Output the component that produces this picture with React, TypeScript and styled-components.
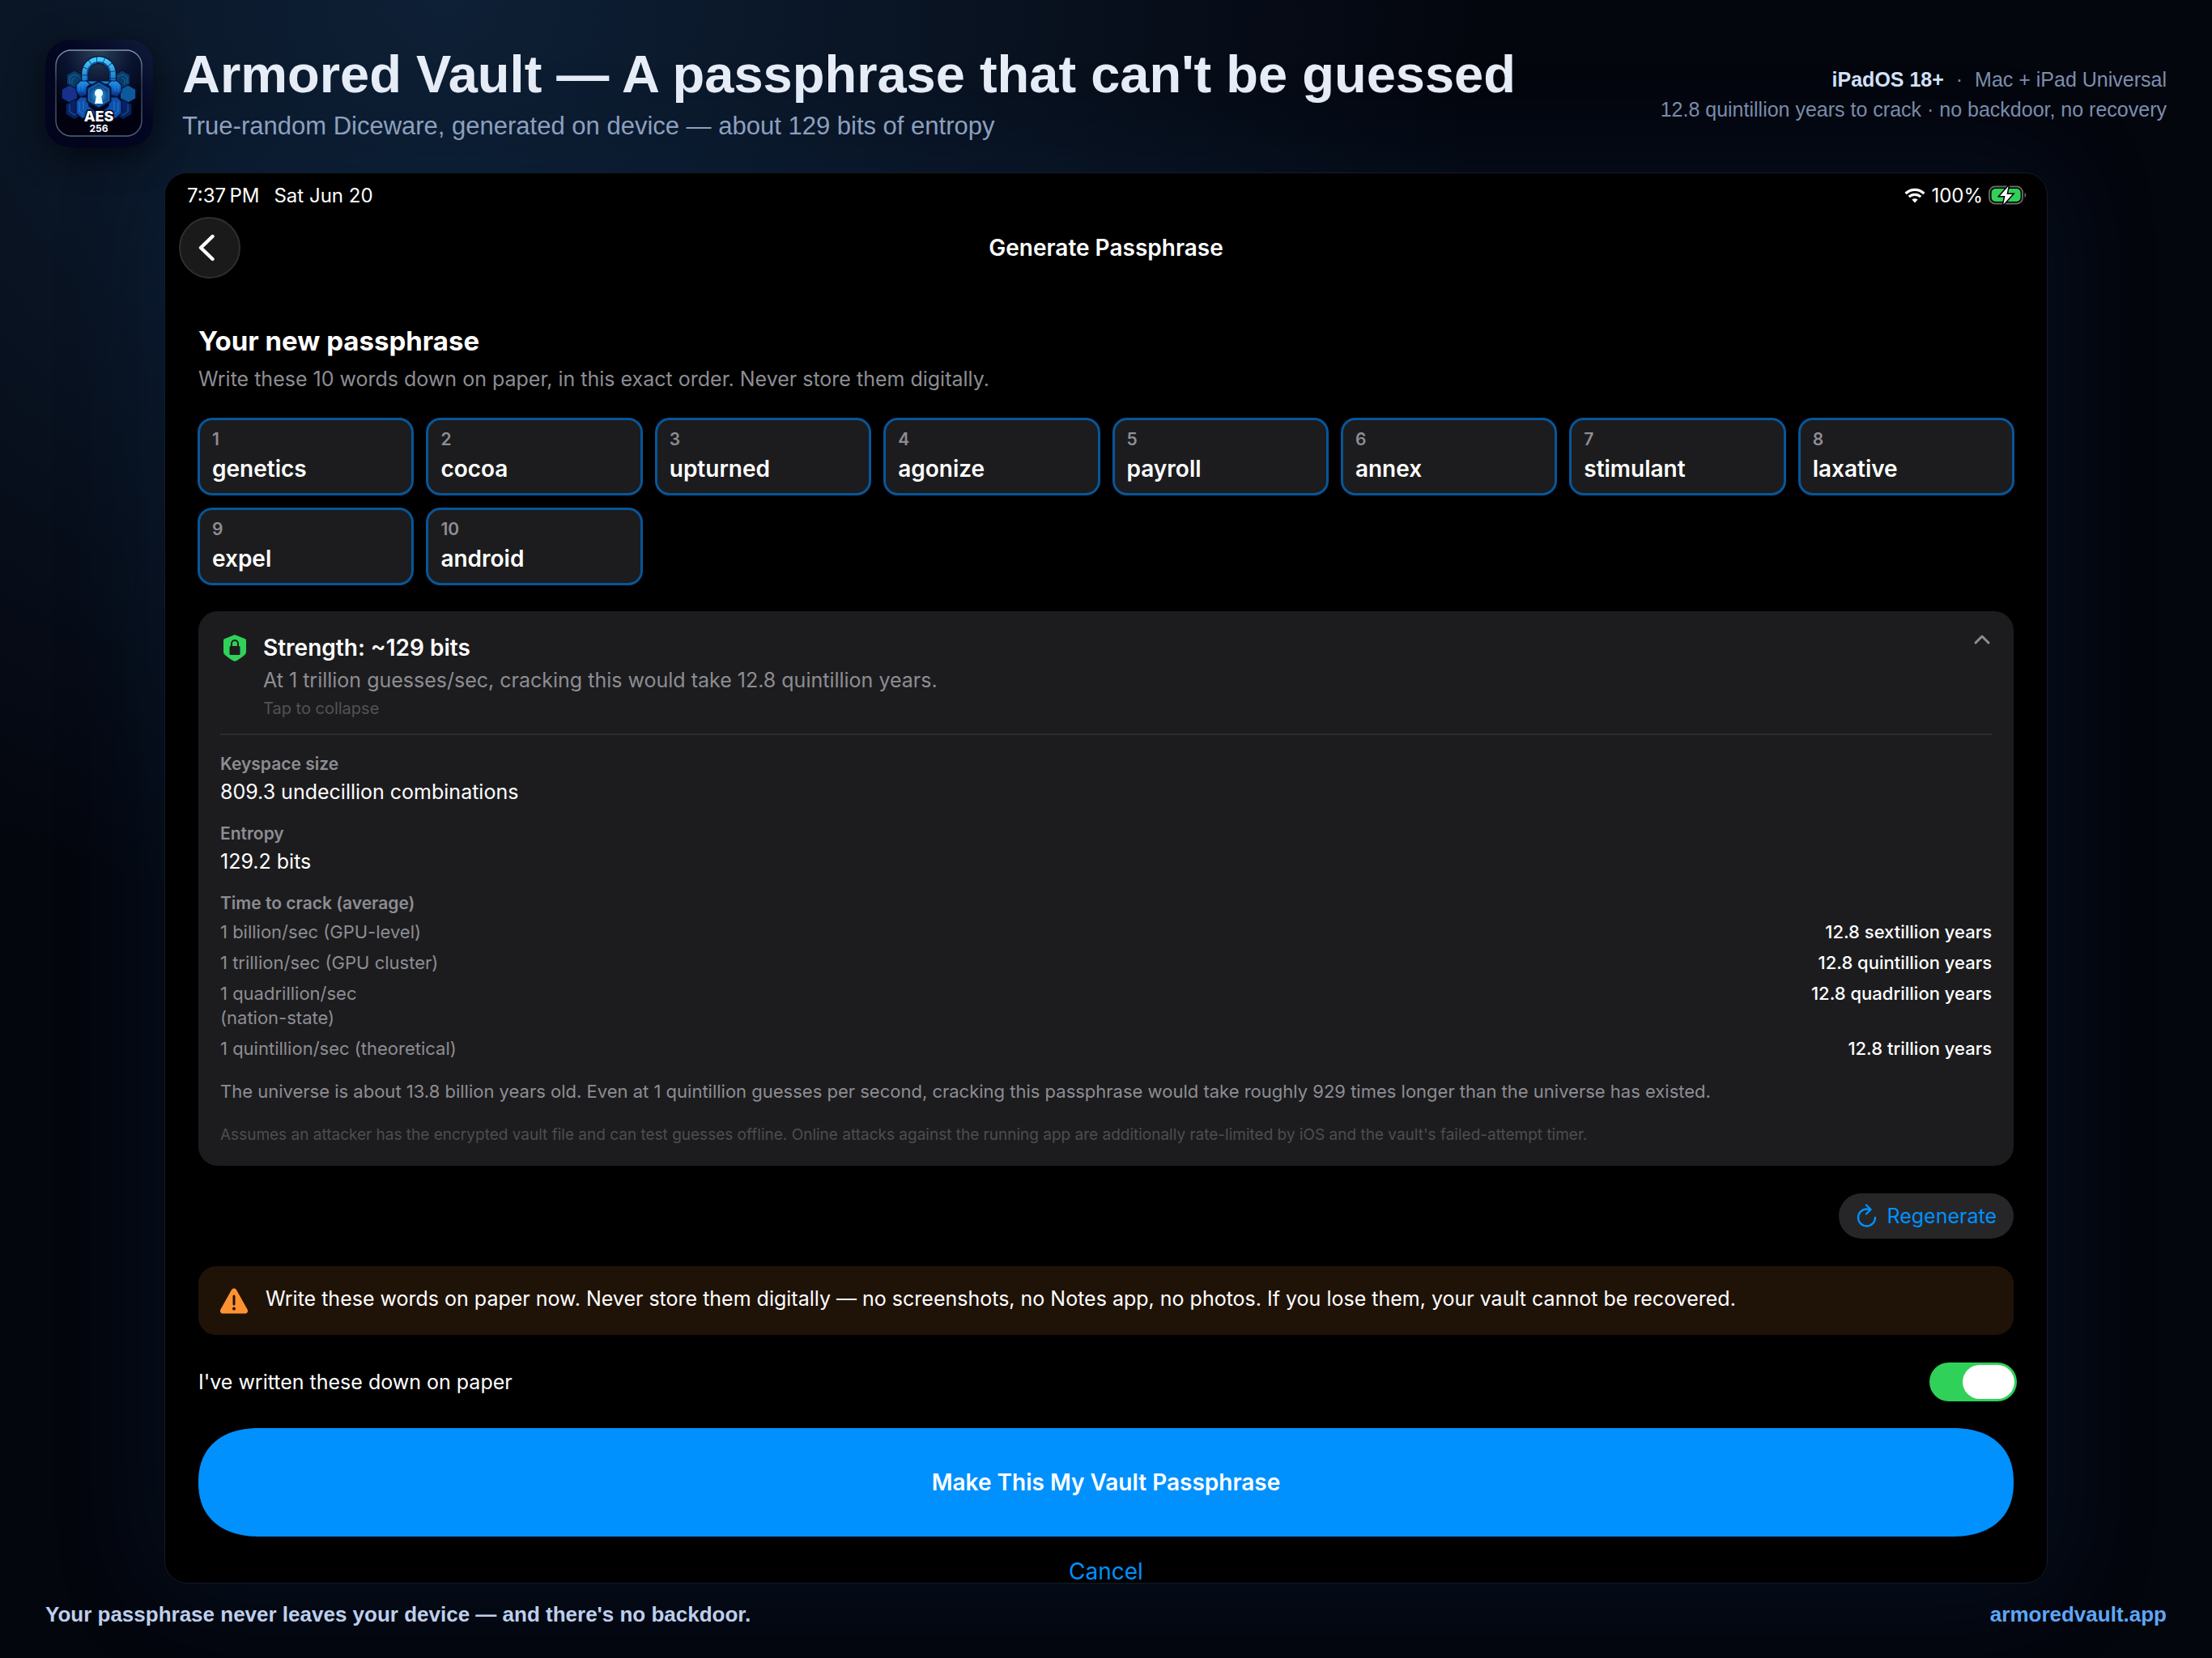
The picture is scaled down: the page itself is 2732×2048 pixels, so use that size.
import React, { useState } from "react";
import styled, { createGlobalStyle } from "styled-components";

const GlobalStyle = createGlobalStyle`
  *, *::before, *::after { box-sizing: border-box; }
  html { background: #04060d; }
  body { margin: 0; }
  h1, h2, h3, p, dl, dd, dt, ol { margin: 0; padding: 0; }
  button { font: inherit; border: 0; padding: 0; cursor: pointer; }
`;

const marketing = `"Liberation Sans", Arial, sans-serif`;
const system = `Inter, "Liberation Sans", sans-serif`;

const Page = styled.div`
  min-height: 100vh;
  display: flex;
  flex-direction: column;
  overflow: hidden;
  padding: 49px 56px 39px;
  font-family: ${marketing};
  background:
    radial-gradient(ellipse 47% 56% at 20% 0%, #0e2036 0%, rgba(14, 32, 54, 0) 100%),
    #04060e;
`;

const Header = styled.header`
  display: flex;
  align-items: center;
  gap: 36px;
  margin-bottom: 31px;
`;

const Logo = styled.svg`
  flex: none;
  width: 133px;
  height: 133px;
  border-radius: 30px;
  box-shadow: 0 10px 40px rgba(0, 0, 0, 0.6);
`;

const Headline = styled.div`
  flex: 1;
  display: flex;
  flex-direction: column;
  gap: 3px;
  padding-top: 3px;
`;

const Title = styled.h1`
  font-size: 65px;
  line-height: 74px;
  font-weight: 700;
  color: #e8eef8;
`;

const Subtitle = styled.p`
  font-size: 31px;
  line-height: 48px;
  color: #94a6c4;
`;

const Meta = styled.p`
  padding-top: 2px;
  font-size: 25px;
  line-height: 37px;
  text-align: right;
  white-space: pre-line;
  color: #7d8fad;
  strong { color: #d3e2fb; margin-right: 8px; }
  span { margin-left: 8px; }
`;

const Screen = styled.main`
  margin: 0 147px;
  flex: 1;
  display: flex;
  flex-direction: column;
  border: 1px solid #131c28;
  border-radius: 28px;
  background: #000;
  color: #fff;
  font-family: ${system};
  box-shadow: 0 0 130px rgba(10, 50, 90, 0.26);
`;

const StatusBar = styled.div`
  display: flex;
  justify-content: space-between;
  align-items: center;
  height: 54px;
  padding: 0 24px 0 27px;
  font-size: 24px;
`;

const StatusGroup = styled.div<{ $gap: number }>`
  display: flex;
  align-items: center;
  gap: ${(p) => p.$gap}px;
`;

const NavBar = styled.nav`
  display: grid;
  grid-template-columns: 1fr auto 1fr;
  align-items: center;
  padding: 0 17px;
`;

const BackButton = styled.button`
  width: 76px;
  height: 76px;
  display: grid;
  place-items: center;
  border: 2px solid #2f2f30;
  border-radius: 50%;
  background: #1a1a1a;
  color: #fff;
`;

const NavTitle = styled.h2`
  font-size: 28px;
  font-weight: 600;
`;

const Content = styled.div`
  display: flex;
  flex-direction: column;
  padding: 54px 41px 0;
`;

const SectionTitle = styled.h2`
  font-size: 33px;
  line-height: 46px;
  font-weight: 700;
`;

const SectionNote = styled.p`
  font-size: 25px;
  line-height: 48px;
  color: #8d8d93;
`;

const WordGrid = styled.ol`
  display: grid;
  grid-template-columns: repeat(8, 1fr);
  gap: 15px;
  margin: 24px -1px 0;
  list-style: none;
`;

const WordCard = styled.li`
  display: flex;
  flex-direction: column;
  height: 96px;
  padding: 9px 15px;
  border: 3px solid #07569a;
  border-radius: 18px;
  background: #1c1c1e;
`;

const WordIndex = styled.span`
  font-size: 21px;
  line-height: 30px;
  font-weight: 600;
  color: #8d8d93;
`;

const Word = styled.span`
  font-size: 28px;
  line-height: 42px;
  font-weight: 600;
`;

const Panel = styled.section`
  display: flex;
  flex-direction: column;
  margin-top: 32px;
  padding: 24px 27px;
  border-radius: 24px;
  background: #1c1c1e;
`;

const Summary = styled.button`
  display: flex;
  align-items: flex-start;
  text-align: left;
  color: #fff;
  background: none;
  border-bottom: 2px solid #2d2d30;
  padding-bottom: 15px;
  > svg { flex: none; }
`;

const SummaryText = styled.span`
  flex: 1;
  display: flex;
  flex-direction: column;
  margin-left: 17px;
`;

const Strength = styled.span`
  font-size: 28px;
  line-height: 42px;
  font-weight: 600;
`;

const Estimate = styled.span`
  font-size: 25px;
  line-height: 38px;
  color: #8d8d93;
`;

const Hint = styled.span`
  font-size: 20px;
  line-height: 32px;
  color: #525255;
`;

const Facts = styled.dl`
  display: flex;
  flex-direction: column;
  gap: 18px;
  padding-top: 20px;
`;

const FactLabel = styled.dt`
  font-size: 21px;
  line-height: 32px;
  font-weight: 600;
  color: #8d8d93;
`;

const FactValue = styled.dd`
  font-size: 25px;
  line-height: 36px;
`;

const CrackTable = styled.table`
  width: 100%;
  margin-top: 18px;
  border-collapse: collapse;
  font-size: 22px;
  line-height: 30px;
  caption {
    text-align: left;
    font-size: 21px;
    line-height: 32px;
    font-weight: 600;
    color: #8d8d93;
  }
  th, td { padding: 4px 0; vertical-align: top; }
  th { text-align: left; font-weight: 400; color: #8d8d93; white-space: pre-line; }
  td { text-align: right; font-weight: 500; }
`;

const Universe = styled.p`
  margin-top: 19px;
  font-size: 22px;
  line-height: 30px;
  color: #8d8d93;
`;

const FinePrint = styled.p`
  margin-top: 25px;
  font-size: 19px;
  line-height: 28px;
  color: #4d4d50;
`;

const Regenerate = styled.button`
  align-self: flex-end;
  display: flex;
  align-items: center;
  gap: 12px;
  height: 56px;
  margin-top: 34px;
  padding: 0 21px;
  border-radius: 28px;
  background: #262628;
  color: #0091ff;
  font-size: 25px;
`;

const Warning = styled.div`
  display: flex;
  align-items: center;
  gap: 21px;
  height: 85px;
  margin-top: 34px;
  padding: 0 26px;
  border-radius: 22px;
  background: #1f1308;
  font-size: 25px;
  p { padding-bottom: 6px; }
`;

const Confirm = styled.label`
  display: flex;
  justify-content: space-between;
  align-items: center;
  margin: 34px -4px 0 0;
  font-size: 25px;
`;

const Switch = styled.input`
  appearance: none;
  display: flex;
  width: 108px;
  height: 48px;
  margin: 0;
  padding: 3px;
  border-radius: 24px;
  background: #39393d;
  &::before {
    content: "";
    width: 64px;
    border-radius: 21px;
    background: #fff;
  }
  &:checked { background: #30d158; justify-content: flex-end; }
`;

const Primary = styled.button`
  height: 134px;
  margin-top: 33px;
  border-radius: 76px / 67px;
  corner-shape: superellipse(1.2);
  background: #0091ff;
  color: #fff;
  font-size: 28px;
  font-weight: 600;
`;

const Cancel = styled.button`
  align-self: center;
  margin-top: 29px;
  background: none;
  color: #0091ff;
  font-size: 28px;
  line-height: 28px;
`;

const Footer = styled.footer`
  display: flex;
  justify-content: space-between;
  margin-top: 23px;
  font-size: 26px;
  line-height: 30px;
  font-weight: 700;
  color: #bdcfec;
  a { color: #5ea7f5; text-decoration: none; }
`;

const words = ["genetics", "cocoa", "upturned", "agonize", "payroll", "annex", "stimulant", "laxative", "expel", "android"];

const facts = [
  ["Keyspace size", "809.3 undecillion combinations"],
  ["Entropy", "129.2 bits"],
];

const rates = [
  ["1 billion/sec (GPU-level)", "12.8 sextillion years"],
  ["1 trillion/sec (GPU cluster)", "12.8 quintillion years"],
  ["1 quadrillion/sec\n(nation-state)", "12.8 quadrillion years"],
  ["1 quintillion/sec (theoretical)", "12.8 trillion years"],
];

const hex = (cx: number, cy: number, r: number) =>
  [[0, -1], [0.87, -0.5], [0.87, 0.5], [0, 1], [-0.87, 0.5], [-0.87, -0.5]]
    .map(([x, y]) => `${cx + x * r},${cy + y * r}`)
    .join(" ");

function VaultLogo() {
  return (
    <Logo viewBox="0 0 133 133" role="img" aria-label="Armored Vault, AES 256">
      <defs>
        <linearGradient id="tile" x1="1" y1="0" x2="0" y2="1">
          <stop offset="0" stopColor="#0f1c3c" />
          <stop offset="0.4" stopColor="#040722" />
          <stop offset="1" stopColor="#03031c" />
        </linearGradient>
        <radialGradient id="face" cx="0.5" cy="0" r="0.8">
          <stop offset="0" stopColor="#2a4258" />
          <stop offset="0.5" stopColor="#0a1330" />
          <stop offset="1" stopColor="#01010f" />
        </radialGradient>
        <linearGradient id="body" x1="0" y1="0" x2="0" y2="1">
          <stop offset="0" stopColor="#1e9af0" />
          <stop offset="0.5" stopColor="#1260c0" />
          <stop offset="1" stopColor="#0a2470" />
        </linearGradient>
        <linearGradient id="ring" x1="0" y1="0" x2="0" y2="1">
          <stop offset="0" stopColor="#45c8fb" />
          <stop offset="1" stopColor="#1470c4" />
        </linearGradient>
        <linearGradient id="rim" x1="0" y1="0" x2="0" y2="1">
          <stop offset="0" stopColor="#7f96ad" />
          <stop offset="0.4" stopColor="#34405a" />
          <stop offset="1" stopColor="#55657e" />
        </linearGradient>
        <radialGradient id="glow">
          <stop offset="0" stopColor="#5fe0ff" stopOpacity="0.9" />
          <stop offset="1" stopColor="#1d8df0" stopOpacity="0" />
        </radialGradient>
      </defs>
      <rect width="133" height="133" rx="30" fill="url(#tile)" />
      <rect x="13" y="13" width="106" height="106" rx="19" fill="url(#face)" stroke="url(#rim)" strokeWidth="1.4" />
      <g stroke="#031030" strokeWidth="1">
        <polygon points={hex(36, 49, 11)} fill="#0a3b68" />
        <polygon points={hex(95, 49, 11)} fill="#0a3b68" />
        <polygon points={hex(30, 67, 11)} fill="#16308c" />
        <polygon points={hex(102, 67, 11)} fill="#0e5a9c" />
        <polygon points={hex(36, 86, 12)} fill="#0a2164" />
        <polygon points={hex(96, 86, 12)} fill="#0a2164" />
      </g>
      <g fill="none" stroke="#1b74b4" strokeWidth="0.8">
        <polyline points="30,54 30,46 36,43 42,46" />
        <polyline points="89,46 95,43 101,46 101,54" />
        <polyline points="33,55 33,49 37,47" />
        <polyline points="94,47 98,49 98,55" />
        <polyline points="30,80 30,89 36,93 41,90" />
        <polyline points="102,80 102,89 96,93 91,90" />
      </g>
      <path d="M49 53V42a17 17 0 0 1 34 0v11" fill="none" stroke="#031238" strokeWidth="10" />
      <path d="M49 53V42a17 17 0 0 1 34 0v11" fill="none" stroke="url(#ring)" strokeWidth="7.5" />
      <path d="M52 53V42a14 14 0 0 1 28 0v11" fill="none" stroke="#0d4a94" strokeWidth="2" />
      <path d="M49 53V42a17 17 0 0 1 34 0v11" fill="none" stroke="#06224f" strokeWidth="8" strokeDasharray="0.7 8" />
      <g fill="url(#body)" stroke="#031238" strokeWidth="1.2">
        <path d="M43 51h18l-9 7v10l-9 3-5-7v-8z" />
        <path d="M89 51H71l9 7v10l9 3 5-7v-8z" />
        <path d="M43 71h9l2 11 9 8-3 7H45l-7-6V76z" fill="#1151ac" />
        <path d="M89 71h-9l-2 11-9 8 3 7h15l7-6V76z" fill="#1151ac" />
        <path d="M51 51h30l-4 4H55z" fill="#1683d0" />
      </g>
      <g fill="none" stroke="#2795e8" strokeWidth="0.7">
        <path d="M42 55v9M46 54v10M90 55v9M86 54v10M42 77v11l5 4M47 76v11M90 77v11l-5 4M85 76v11" />
      </g>
      <polygon points={hex(66, 68, 17)} fill="#0a2f6e" stroke="#031238" strokeWidth="1.4" />
      <polygon points={hex(66, 68, 14)} fill="#0b4386" stroke="#1c80c8" strokeWidth="1" />
      <circle cx="66" cy="69" r="13" fill="url(#glow)" />
      <path d="M66 61a5 5 0 0 1 3 9l2 9H61l2-9a5 5 0 0 1 3-9z" fill="#eafcff" />
      <g fill="#fff" stroke="#02051a" strokeWidth="3" paintOrder="stroke" textAnchor="middle" fontFamily="Inter, sans-serif" fontWeight="800">
        <text x="66" y="101" fontSize="18">AES</text>
        <text x="66" y="114" fontSize="12" fontWeight="700">256</text>
      </g>
    </Logo>
  );
}

function WifiIcon() {
  return (
    <svg width="26" height="20" viewBox="0 0 26 20" aria-hidden="true" fill="none" stroke="#fff" strokeWidth="3.2">
      <path d="M1.600 8a16.200 16.200 0 0 1 22.800 0" />
      <path d="M5.800 12.200a10.400 10.400 0 0 1 14.400 0" />
      <path d="M13 19.400l-3.600-3.800a5.200 5.200 0 0 1 7.200 0z" fill="#fff" stroke="none" />
    </svg>
  );
}

function BatteryIcon() {
  return (
    <svg width="48" height="24" viewBox="0 0 48 24" aria-hidden="true">
      <rect x="1" y="1.5" width="41" height="21" rx="7" fill="none" stroke="#6a6a6a" strokeWidth="1.8" />
      <rect x="3.6" y="4" width="36" height="16" rx="5" fill="#30d158" />
      <path d="M44.5 9c2.400 1 2.400 5 0 6z" fill="#6a6a6a" />
      <path d="M24.500 1L14 13h6.500l-2.200 10.500L29.500 11h-7z" fill="#fff" stroke="#000" strokeWidth="3" paintOrder="stroke" />
    </svg>
  );
}

function ShieldIcon() {
  return (
    <svg width="36" height="42" viewBox="0 0 36 42" aria-hidden="true">
      <path d="M18 5l12.500 5c1 .4 1.500 1 1.500 2.200V26c0 2-.8 3.200-2.400 4.400C26.500 33 22.500 36 18 38c-4.500-2-8.500-5-11.600-7.600C4.800 29.200 4 28 4 26V12.200C4 11 4.500 10.400 5.500 10z" fill="#30d158" />
      <rect x="11.500" y="19" width="13" height="11" rx="1.500" fill="#1c1c1e" />
      <path d="M14 19.500v-3.500a4 4 0 0 1 8 0v3.500" fill="none" stroke="#1c1c1e" strokeWidth="2" />
    </svg>
  );
}

function WarningIcon() {
  return (
    <svg width="36" height="34" viewBox="0 0 36 34" aria-hidden="true">
      <path d="M15 3.200c1.300-2.300 4.700-2.300 6 0l13.600 24.200c1.300 2.300-.3 5.100-2.900 5.100H4.300c-2.600 0-4.200-2.800-2.900-5.100z" fill="#ff9230" />
      <path d="M18 11v10" stroke="#1f1308" strokeWidth="3" strokeLinecap="round" />
      <circle cx="18" cy="26.500" r="2" fill="#1f1308" />
    </svg>
  );
}

export default function App() {
  const [written, setWritten] = useState(true);
  return (
    <>
      <GlobalStyle />
      <Page>
        <Header>
          <VaultLogo />
          <Headline>
            <Title>Armored Vault — A passphrase that can't be guessed</Title>
            <Subtitle>True-random Diceware, generated on device — about 129 bits of entropy</Subtitle>
          </Headline>
          <Meta>
            <strong>iPadOS 18+</strong> · <span>Mac + iPad Universal</span>
            {"\n"}12.8 quintillion years to crack · no backdoor, no recovery
          </Meta>
        </Header>
        <Screen>
          <StatusBar>
            <StatusGroup $gap={18}>
              <span>{"7:37\u2009PM"}</span>
              <span>Sat Jun 20</span>
            </StatusGroup>
            <StatusGroup $gap={7}>
              <WifiIcon />
              <span>100%</span>
              <BatteryIcon />
            </StatusGroup>
          </StatusBar>
          <NavBar>
            <BackButton aria-label="Back">
              <svg width="28" height="36" viewBox="0 0 28 36" fill="none" stroke="currentColor" strokeWidth="4.4" strokeLinecap="round" strokeLinejoin="round" aria-hidden="true">
                <path d="M17.500 4L3 18l14.500 14" />
              </svg>
            </BackButton>
            <NavTitle>Generate Passphrase</NavTitle>
          </NavBar>
          <Content>
            <SectionTitle>Your new passphrase</SectionTitle>
            <SectionNote>Write these 10 words down on paper, in this exact order. Never store them digitally.</SectionNote>
            <WordGrid>
              {words.map((word, i) => (
                <WordCard key={word}>
                  <WordIndex>{i + 1}</WordIndex>
                  <Word>{word}</Word>
                </WordCard>
              ))}
            </WordGrid>
            <Panel>
              <Summary aria-expanded="true">
                <ShieldIcon />
                <SummaryText>
                  <Strength>Strength: ~129 bits</Strength>
                  <Estimate>At 1 trillion guesses/sec, cracking this would take 12.8 quintillion years.</Estimate>
                  <Hint>Tap to collapse</Hint>
                </SummaryText>
                <svg width="24" height="24" viewBox="0 0 24 24" fill="none" stroke="#8d8d93" strokeWidth="3" strokeLinecap="round" strokeLinejoin="round" aria-hidden="true">
                  <path d="M4 15l8-8 8 8" />
                </svg>
              </Summary>
              <Facts>
                {facts.map(([label, value]) => (
                  <div key={label}>
                    <FactLabel>{label}</FactLabel>
                    <FactValue>{value}</FactValue>
                  </div>
                ))}
              </Facts>
              <CrackTable>
                <caption>Time to crack (average)</caption>
                <tbody>
                  {rates.map(([rate, time]) => (
                    <tr key={rate}>
                      <th scope="row">{rate}</th>
                      <td>{time}</td>
                    </tr>
                  ))}
                </tbody>
              </CrackTable>
              <Universe>
                The universe is about 13.8 billion years old. Even at 1 quintillion guesses per second, cracking this passphrase would take roughly 929 times longer than the universe has existed.
              </Universe>
              <FinePrint>
                Assumes an attacker has the encrypted vault file and can test guesses offline. Online attacks against the running app are additionally rate-limited by iOS and the vault's failed-attempt timer.
              </FinePrint>
            </Panel>
            <Regenerate>
              <svg width="26" height="30" viewBox="0 0 26 30" fill="none" stroke="currentColor" strokeWidth="2.4" strokeLinecap="round" strokeLinejoin="round" aria-hidden="true">
                <path d="M24 17a10.500 10.500 0 1 1-10.500-10.500c1.500 0 3 .2 4.500.7" />
                <path d="M13 1.500l5.500 5.500-5.500 5.500" />
              </svg>
              Regenerate
            </Regenerate>
            <Warning role="note">
              <WarningIcon />
              <p>Write these words on paper now. Never store them digitally — no screenshots, no Notes app, no photos. If you lose them, your vault cannot be recovered.</p>
            </Warning>
            <Confirm>
              I've written these down on paper
              <Switch type="checkbox" role="switch" checked={written} onChange={(e) => setWritten(e.target.checked)} />
            </Confirm>
            <Primary>Make This My Vault Passphrase</Primary>
            <Cancel>Cancel</Cancel>
          </Content>
        </Screen>
        <Footer>
          <span>Your passphrase never leaves your device — and there's no backdoor.</span>
          <a href="#armoredvault">armoredvault.app</a>
        </Footer>
      </Page>
    </>
  );
}
